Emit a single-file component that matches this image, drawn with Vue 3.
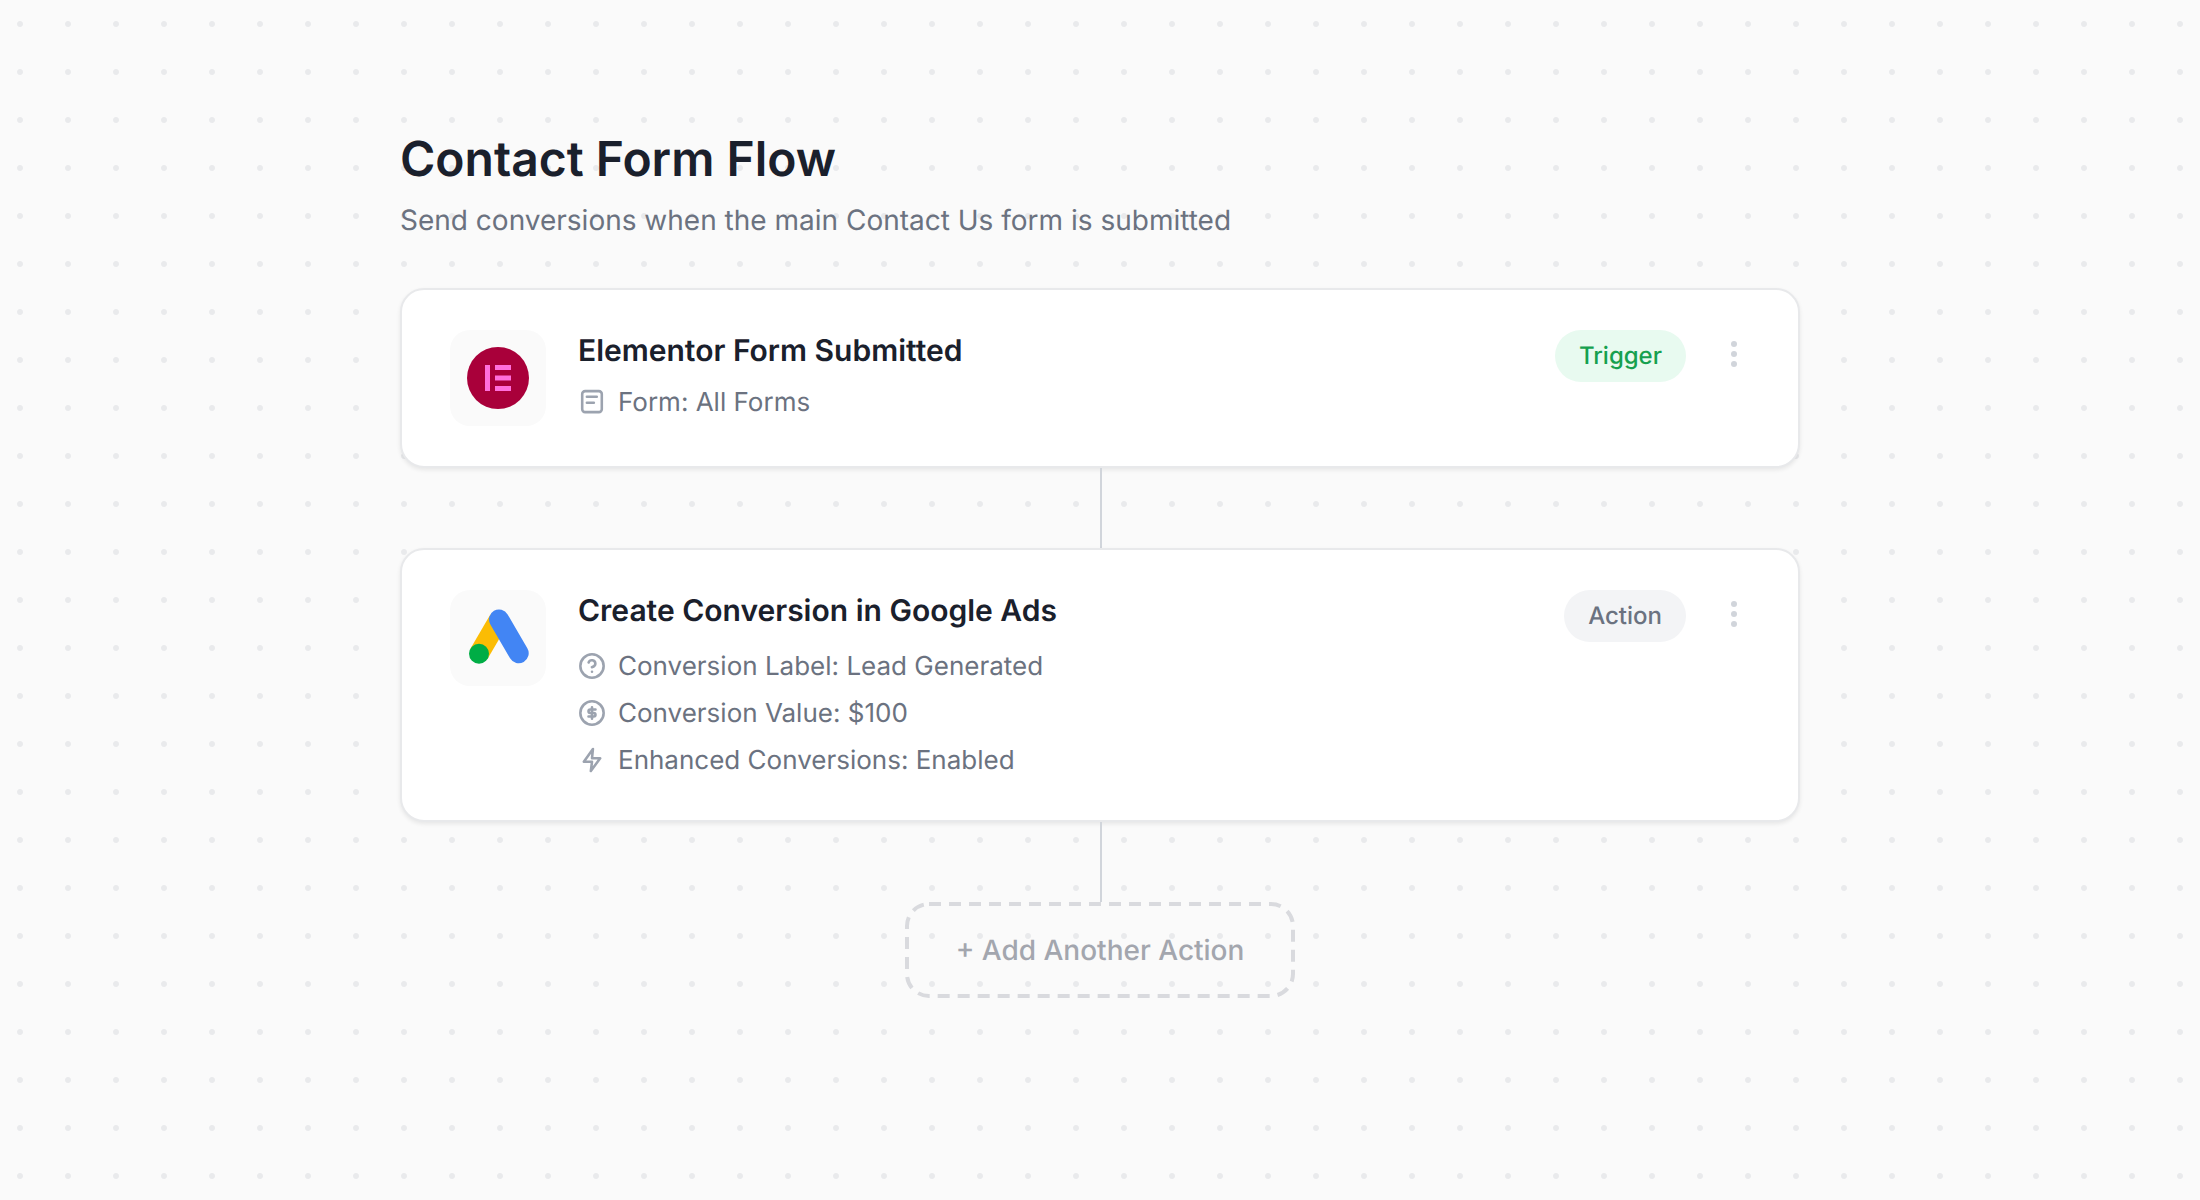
<template>
	<div class="page">
		<div class="flow">
			<h1>Contact Form Flow</h1>
			<p class="subtitle">Send conversions when the main Contact Us form is submitted</p>

			<div class="card">
				<div class="logo">
					<svg width="96" height="96" viewBox="0 0 96 96">
						<circle cx="48" cy="48" r="31" fill="#a9003a" />
						<rect x="35" y="35" width="5" height="26" fill="#ff6fdc" />
						<rect x="45" y="35" width="16" height="5" fill="#ff6fdc" />
						<rect x="45" y="45.5" width="16" height="5" fill="#ff6fdc" />
						<rect x="45" y="56" width="16" height="5" fill="#ff6fdc" />
					</svg>
				</div>
				<div class="info">
					<h3>Elementor Form Submitted</h3>
					<div class="meta first">
						<svg class="ico" viewBox="0 0 24 24">
							<rect x="3.6" y="2.7" width="16.8" height="18" rx="2.5" />
							<path d="M7.6 7.5h8.5M7.6 12.6h6" />
						</svg>
						<span>Form: All Forms</span>
					</div>
				</div>
				<span class="badge trigger">Trigger</span>
				<svg class="more" width="6" height="26" viewBox="0 0 6 26">
					<circle cx="3" cy="3" r="3" />
					<circle cx="3" cy="13" r="3" />
					<circle cx="3" cy="23" r="3" />
				</svg>
			</div>

			<div class="line"></div>

			<div class="card">
				<div class="logo">
					<svg width="96" height="96" viewBox="0 0 96 96">
						<path d="M29 63.7 49 29.5" stroke="#fbbc04" stroke-width="20" fill="none" />
						<path d="M49 29.5 68.7 63.3" stroke="#4285f4" stroke-width="20" stroke-linecap="round" fill="none" />
						<circle cx="29" cy="63.7" r="10" fill="#00ad45" />
					</svg>
				</div>
				<div class="info">
					<h3>Create Conversion in Google Ads</h3>
					<div class="rows">
						<div v-for="row in rows" :key="row.text" class="meta">
							<svg class="ico" viewBox="0 0 24 24">
								<template v-if="row.icon === 'help'">
									<circle cx="12" cy="12" r="10" />
									<path d="M9.1 9a3 3 0 0 1 5.8 1c0 2-3 3-3 3M12 17h.01" />
								</template>
								<template v-if="row.icon === 'dollar'">
									<circle cx="12" cy="12" r="10" />
									<path d="M15 9h-4.5a1.5 1.5 0 0 0 0 3h3a1.5 1.5 0 0 1 0 3H9M12 7v10" />
								</template>
								<path v-if="row.icon === 'zap'" d="M12.8 2.5 5 13.5h7l-1 8 8-11h-7z" />
							</svg>
							<span>{{ row.text }}</span>
						</div>
					</div>
				</div>
				<span class="badge action">Action</span>
				<svg class="more" width="6" height="26" viewBox="0 0 6 26">
					<circle cx="3" cy="3" r="3" />
					<circle cx="3" cy="13" r="3" />
					<circle cx="3" cy="23" r="3" />
				</svg>
			</div>

			<div class="line"></div>

			<button class="add">
				<svg class="dashes" width="390" height="96" viewBox="0 0 390 96">
					<rect x="2" y="2" width="386" height="92" rx="22" />
				</svg>
				+ Add Another Action
			</button>
		</div>
	</div>
</template>

<script setup>
const rows = [
	{ icon: 'help', text: 'Conversion Label: Lead Generated' },
	{ icon: 'dollar', text: 'Conversion Value: $100' },
	{ icon: 'zap', text: 'Enhanced Conversions: Enabled' },
];
</script>

<style scoped>
.page {
	min-height: 1200px;
	box-sizing: border-box;
	padding-top: 128px;
	background-color: #fafafa;
	background-image: radial-gradient(circle, #e9eaec 2.5px, transparent 3.5px);
	background-size: 48px 48px;
	background-position: -4px 0;
	font-family: Inter, "Liberation Sans", sans-serif;
	text-rendering: geometricPrecision;
	-webkit-font-smoothing: antialiased;
}
.flow {
	width: 1400px;
	margin: 0 auto;
	display: flex;
	flex-direction: column;
}
h1 {
	margin: 0;
	font-size: 48px;
	line-height: 62px;
	font-weight: 600;
	color: #1a202c;
}
.subtitle {
	margin: 10px 0 48px;
	font-size: 28px;
	line-height: 40px;
	color: #6b7280;
}
.card {
	display: flex;
	align-items: flex-start;
	box-sizing: border-box;
	padding: 40px 48px;
	background: #fff;
	border: 2px solid #e8e9eb;
	border-radius: 24px;
	box-shadow: 0 2px 4px rgba(0, 0, 0, 0.08);
}
.logo {
	width: 96px;
	height: 96px;
	flex-shrink: 0;
	margin-right: 32px;
	background: #fafafa;
	border-radius: 20px;
}
.logo svg {
	display: block;
}
.info {
	flex: 1;
}
h3 {
	margin: 0 0 14px;
	font-size: 30px;
	line-height: 42px;
	font-weight: 600;
	color: #1a202c;
}
.rows {
	display: flex;
	flex-direction: column;
	gap: 7px;
}
.meta {
	display: flex;
	align-items: center;
	gap: 12px;
	height: 40px;
	font-size: 26px;
	color: #6b7280;
}
.meta.first {
	margin-top: -4px;
}
.ico {
	width: 28px;
	height: 28px;
	flex-shrink: 0;
	fill: none;
	stroke: #9ca3af;
	stroke-width: 2.2;
	stroke-linecap: round;
	stroke-linejoin: round;
}
.badge {
	height: 52px;
	line-height: 52px;
	padding: 0 24px;
	border-radius: 26px;
	font-size: 24px;
	font-weight: 500;
}
.trigger {
	background: #e8faf0;
	color: #16a04f;
}
.action {
	background: #f3f4f6;
	color: #6b7280;
}
.more {
	margin: 11px 13px 0 45px;
	fill: #d1d5db;
}
.line {
	width: 2px;
	height: 80px;
	margin-left: 2px;
	align-self: center;
	background: #d1d5db;
}
.add {
	position: relative;
	align-self: center;
	width: 390px;
	height: 96px;
	padding: 0;
	background: transparent;
	border: none;
	font-family: inherit;
	font-size: 28px;
	font-weight: 500;
	color: #a3a6ae;
	text-rendering: geometricPrecision;
}
.dashes {
	position: absolute;
	left: 0;
	top: 0;
	fill: none;
	stroke: #d9dade;
	stroke-width: 4;
	stroke-dasharray: 12 8;
}
</style>

<style>
body {
	background: #fafafa;
}
</style>
